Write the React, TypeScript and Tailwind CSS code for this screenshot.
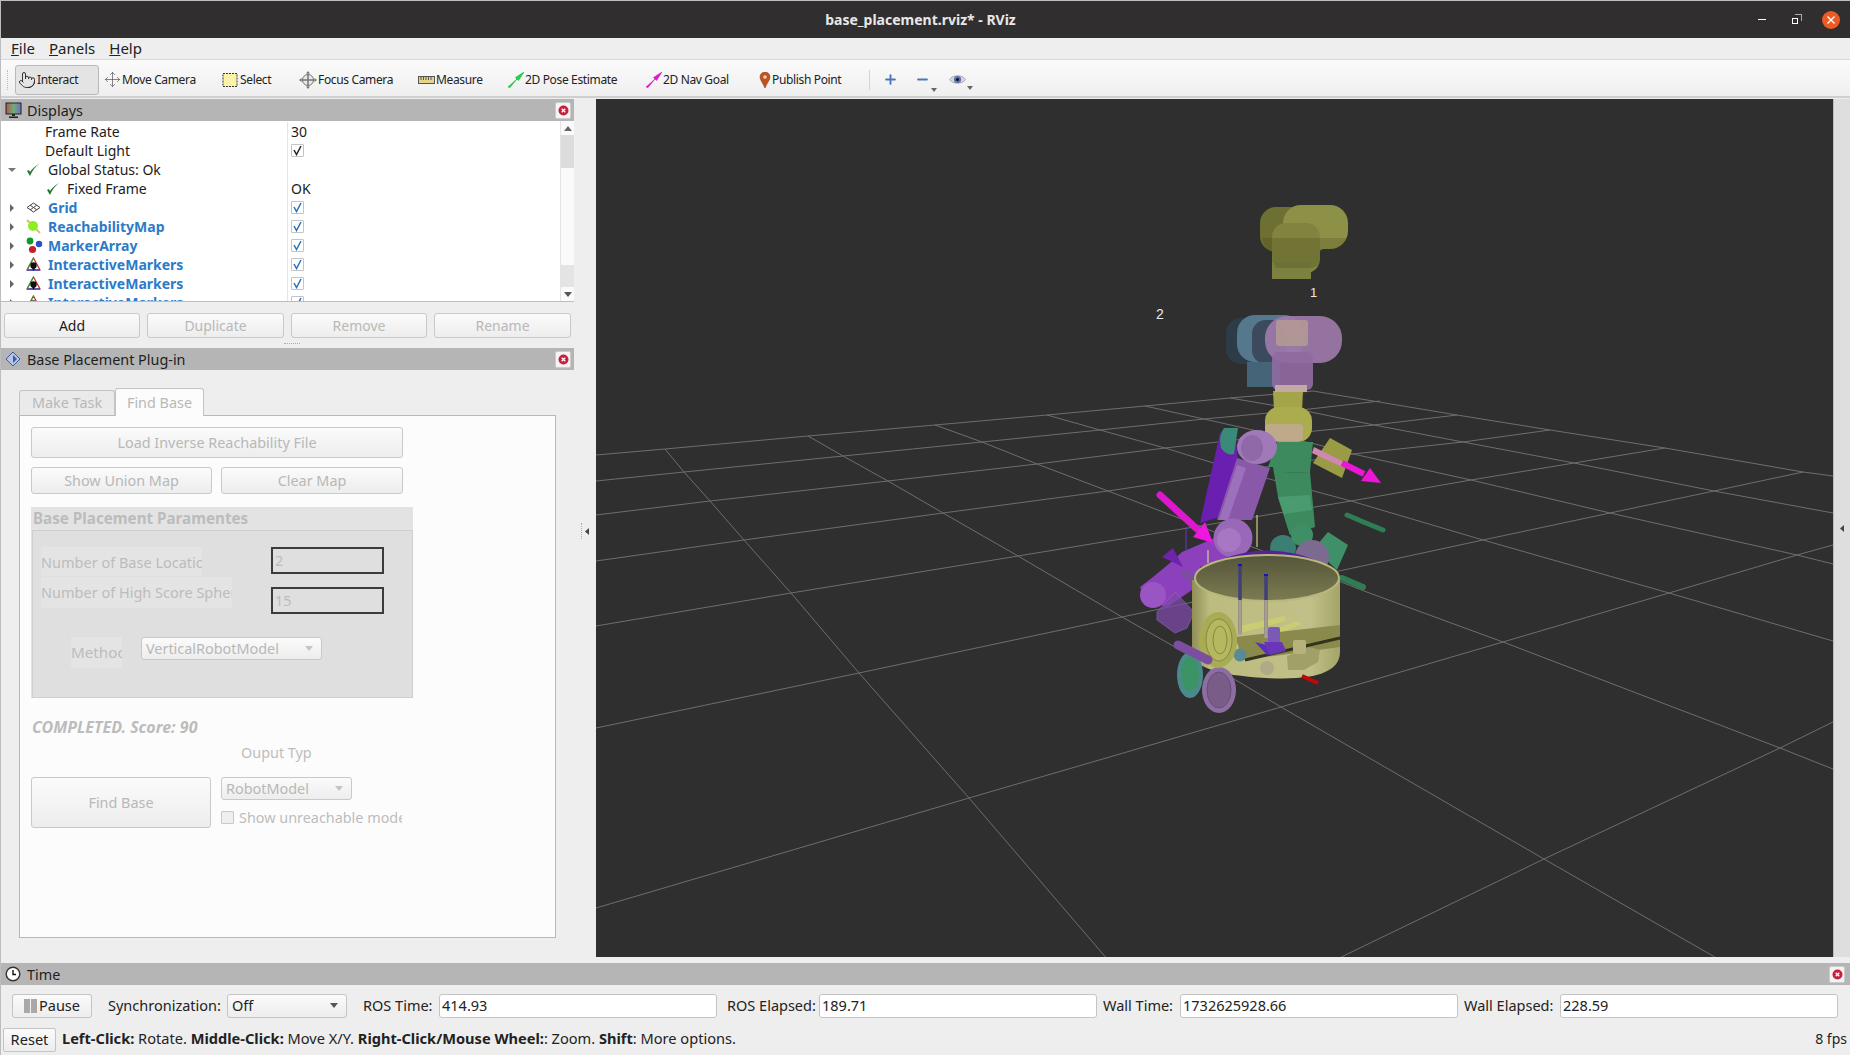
import { Minus, Move, Plus, Pointer } from 'lucide-react';

const Caret = ({ open = false }: { open?: boolean }) => (
  <svg width="8" height="8" viewBox="0 0 8 8" className="shrink-0">
    {open ? <path d="M0 2h8L4 6z" fill="#777" /> : <path d="M2 0l4 4-4 4z" fill="#666" />}
  </svg>
);

const GreenCheck = () => (
  <svg width="14" height="14" viewBox="0 0 14 14" className="shrink-0">
    <path d="M1 8l3 5C6 8 9 4 13 1 9 3 6 6 4 9L3 7z" fill="#1f7a2e" />
  </svg>
);

const CheckBox = ({ color = '#2a6fb5' }: { color?: string }) => (
  <div className="flex h-[13px] w-[13px] items-center justify-center rounded-[1px] border border-[#c4c4c4] bg-white">
    <svg width="11" height="11" viewBox="0 0 11 11">
      <path d="M2 5l2.5 4.5L9 1" fill="none" stroke={color} strokeWidth="1.5" />
    </svg>
  </div>
);

const CloseBtn = () => (
  <div className="flex h-[17px] w-[16px] items-center justify-center rounded-[2px] border border-[#ccc] bg-[#f4f4f4]">
    <svg width="11" height="11" viewBox="0 0 11 11">
      <circle cx="5.5" cy="5.5" r="5" fill="#c8203c" />
      <path d="M3.7 3.7l3.6 3.6M7.3 3.7L3.7 7.3" stroke="#fff" strokeWidth="1.3" />
    </svg>
  </div>
);

const PanelHeader = ({ icon, title, pad = 'pr-[3px]' }: { icon: React.ReactNode; title: string; pad?: string }) => (
  <div className={`flex h-[22px] shrink-0 items-center bg-[#b5b5b5] pl-[4px] text-[14.4px] text-[#1e1e1e] ${pad}`}>
    <div className="flex w-[22px] shrink-0 items-center">{icon}</div>
    <span className="flex-1 pt-[1px]">{title}</span>
    <CloseBtn />
  </div>
);

const MonitorIcon = () => (
  <svg width="17" height="17" viewBox="0 0 17 17">
    <defs>
      <linearGradient id="scr" x1="0" x2="1" y1="0" y2="0">
        <stop offset="0" stopColor="#b5544f" />
        <stop offset="0.5" stopColor="#6fae76" />
        <stop offset="1" stopColor="#6e6fc0" />
      </linearGradient>
    </defs>
    <rect x="1" y="1" width="15" height="11" fill="url(#scr)" stroke="#222" />
    <path d="M7 12h3v2H7zM4 14.5h9v1.5H4z" fill="#222" />
  </svg>
);

const DiamondIcon = () => (
  <svg width="16" height="16" viewBox="0 0 16 16">
    <path d="M8 1l7 7-7 7-7-7z" fill="#b8c4e4" stroke="#3f5a9e" />
    <path d="M8 4l4 4-4 4z" fill="#3f5a9e" />
  </svg>
);

const ClockIcon = () => (
  <svg width="16" height="16" viewBox="0 0 16 16">
    <circle cx="8" cy="8" r="6.8" fill="#fff" stroke="#333" strokeWidth="1.4" />
    <path d="M8 4v4.5h3" fill="none" stroke="#111" strokeWidth="1.4" />
  </svg>
);

const GridIcon = () => (
  <svg width="15" height="11" viewBox="0 0 15 11">
    <path d="M7.5 1L14 5.5 7.5 10 1 5.5zM4.2 3.2l6.5 4.6M10.8 3.2L4.3 7.8" fill="none" stroke="#444" strokeWidth="1" />
  </svg>
);

const ReachIcon = () => (
  <svg width="15" height="15" viewBox="0 0 15 15">
    <path d="M1 1l13 13" stroke="#e8b090" strokeWidth="2" />
    <circle cx="7" cy="7" r="5" fill="#8cf01e" />
  </svg>
);

const MarkerIcon = () => (
  <svg width="17" height="17" viewBox="0 0 17 17">
    <circle cx="4" cy="4" r="3.4" fill="#0e9a2e" />
    <circle cx="13" cy="7" r="3.2" fill="#2450c8" />
    <circle cx="6.5" cy="12.5" r="3.6" fill="#c81e28" />
  </svg>
);

const InteractiveIcon = () => (
  <svg width="15" height="15" viewBox="0 0 15 15">
    <path d="M7.5 1L14 13H1z" fill="none" stroke="#c02828" strokeWidth="1.2" />
    <path d="M1 13h13" stroke="#2a3ccc" strokeWidth="1.4" />
    <path d="M1 13L7.5 1" stroke="#22a83a" strokeWidth="1.2" />
    <circle cx="7.5" cy="8.5" r="3.2" fill="#111" />
    <path d="M6 11l1.5 3 1.5-3z" fill="#111" />
  </svg>
);

const treeRows = [
  { name: 'Grid', icon: <GridIcon /> },
  { name: 'ReachabilityMap', icon: <ReachIcon /> },
  { name: 'MarkerArray', icon: <MarkerIcon /> },
  { name: 'InteractiveMarkers', icon: <InteractiveIcon /> },
  { name: 'InteractiveMarkers', icon: <InteractiveIcon /> },
  { name: 'InteractiveMarkers', icon: <InteractiveIcon /> },
];

const Row = ({ children, value }: { children: React.ReactNode; value?: React.ReactNode }) => (
  <div className="flex h-[19px] shrink-0 items-center">
    <div className="flex h-full w-[286px] shrink-0 items-center">{children}</div>
    <div className="flex h-full flex-1 items-center border-l border-[#e4e4e4] pl-[3px]">{value}</div>
  </div>
);

const DisplaysTree = () => (
  <div className="flex h-[181px] shrink-0 overflow-hidden border-b border-[#bdbdbd] bg-white text-[14px] text-[#1c1c1c]">
    <div className="flex min-w-0 flex-1 flex-col pt-[1px]">
      <Row value={<span>30</span>}>
        <span className="pl-[44px]">Frame Rate</span>
      </Row>
      <Row value={<CheckBox color="#222" />}>
        <span className="pl-[44px]">Default Light</span>
      </Row>
      <Row>
        <div className="flex items-center pl-[7px]">
          <Caret open />
          <div className="ml-[10px] w-[22px]">
            <GreenCheck />
          </div>
          <span>Global Status: Ok</span>
        </div>
      </Row>
      <Row value={<span>OK</span>}>
        <div className="flex items-center pl-[45px]">
          <div className="w-[21px]">
            <GreenCheck />
          </div>
          <span>Fixed Frame</span>
        </div>
      </Row>
      {treeRows.map((r, i) => (
        <Row key={i} value={<CheckBox />}>
          <div className="flex items-center pl-[7px]">
            <Caret />
            <div className="ml-[10px] flex w-[22px] justify-start">{r.icon}</div>
            <span className="font-bold text-[#2b7bc9]">{r.name}</span>
          </div>
        </Row>
      ))}
    </div>
    <div className="flex w-[14px] shrink-0 flex-col border-l border-[#e4e4e4] bg-[#fafafa]">
      <div className="flex h-[14px] items-center justify-center">
        <svg width="8" height="5" viewBox="0 0 8 5">
          <path d="M4 0l4 5H0z" fill="#666" />
        </svg>
      </div>
      <div className="h-[33px] bg-[#dcdcdc]" />
      <div className="flex-1" />
      <div className="h-[22px] bg-[#e4e4e4]" />
      <div className="flex h-[14px] items-center justify-center">
        <svg width="8" height="5" viewBox="0 0 8 5">
          <path d="M4 5l4-5H0z" fill="#555" />
        </svg>
      </div>
    </div>
  </div>
);

const Btn = ({ label, disabled = false, className = '' }: { label: string; disabled?: boolean; className?: string }) => (
  <div
    className={`flex items-center justify-center rounded-[3px] border border-[#c9c9c9] bg-gradient-to-b from-[#fbfbfb] to-[#ededed] ${
      disabled ? 'text-[#b8b8b8]' : 'text-[#1c1c1c]'
    } ${className}`}
  >
    {label}
  </div>
);

const Combo = ({ label, className = '' }: { label: string; className?: string }) => (
  <div
    className={`flex items-center justify-between rounded-[3px] border border-[#c9c9c9] bg-gradient-to-b from-[#fbfbfb] to-[#ededed] pr-[8px] pl-[4px] text-[#b8b8b8] ${className}`}
  >
    <span>{label}</span>
    <svg width="8" height="5" viewBox="0 0 8 5">
      <path d="M0 0h8L4 5z" fill="#c4c4c4" />
    </svg>
  </div>
);

const BasePlacement = () => (
  <div className="flex flex-1 flex-col pt-[18px] pr-[18px] pl-[18px] text-[14.4px]">
    <div className="flex h-[27px] items-end">
      <div className="flex h-[25px] w-[96px] items-center justify-center rounded-t-[3px] border border-b-0 border-[#c4c4c4] bg-[#eaeaea] text-[#b8b8b8]">
        Make Task
      </div>
      <div className="relative z-10 -mb-px flex h-[28px] w-[89px] items-center justify-center rounded-t-[3px] border border-b-0 border-[#c4c4c4] bg-[#fcfcfc] text-[#b8b8b8]">
        Find Base
      </div>
    </div>
    <div className="h-[523px] w-[537px] border border-[#b8b8b8] bg-[#fcfcfc] pt-[11px] pl-[11px]">
      <Btn disabled label="Load Inverse Reachability File" className="h-[31px] w-[372px]" />
      <div className="mt-[9px] flex w-[372px] gap-[9px]">
        <Btn disabled label="Show Union Map" className="h-[27px] w-[181px]" />
        <Btn disabled label="Clear Map" className="h-[27px] w-[182px]" />
      </div>
      <div className="mt-[13px] w-[382px] bg-[#e3e3e3]">
        <div className="flex h-[23px] items-center pl-[2px] text-[15.2px] font-bold text-[#bcbcbc]">Base Placement Paramentes</div>
        <div className="ml-[1px] h-[168px] border border-[#cfcfcf] bg-[#dfdfdf] pt-[16px] pl-[8px] text-[#bcbcbc]">
          <div className="flex h-[30px]">
            <div className="w-[230px]">
              <div className="flex h-[29px] w-[161px] items-center overflow-hidden bg-[#e4e4e4] pt-[2px] text-[14.5px] whitespace-nowrap">
                Number of Base Locations
              </div>
            </div>
            <div className="flex h-[27px] w-[113px] items-center border-2 border-[#3c3c3c] pl-[2px]">2</div>
          </div>
          <div className="flex h-[31px]">
            <div className="w-[230px]">
              <div className="flex h-[31px] w-[191px] items-center overflow-hidden bg-[#e4e4e4] text-[14.5px] whitespace-nowrap">
                Number of High Score Spheres
              </div>
            </div>
            <div className="mt-[10px] flex h-[27px] w-[113px] items-center border-2 border-[#3c3c3c] pl-[2px]">15</div>
          </div>
          <div className="mt-[29px] flex pl-[30px]">
            <div className="flex h-[31px] w-[51px] items-center overflow-hidden bg-[#e4e4e4] text-[15.2px] whitespace-nowrap">Method</div>
            <Combo label="VerticalRobotModel" className="ml-[19px] h-[23px] w-[181px]" />
          </div>
        </div>
      </div>
      <div className="mt-[18px] pl-[1px] text-[16px] leading-[22px] font-bold text-[#bcbcbc] italic">COMPLETED. Score: 90</div>
      <div className="mt-[5px] pl-[210px] leading-[19px] text-[#bcbcbc]">Ouput Typ</div>
      <div className="mt-[15px] flex gap-[10px]">
        <Btn disabled label="Find Base" className="h-[51px] w-[180px]" />
        <div className="flex flex-col">
          <Combo label="RobotModel" className="h-[23px] w-[131px]" />
          <div className="mt-[7px] flex w-[181px] items-center overflow-hidden whitespace-nowrap text-[#bcbcbc]">
            <div className="mr-[5px] h-[13px] w-[13px] shrink-0 rounded-[1px] border border-[#c9c9c9] bg-[#efefef]" />
            Show unreachable models
          </div>
        </div>
      </div>
    </div>
  </div>
);

const tools = [
  {
    label: 'Move Camera',
    width: 'w-[118px]',
    icon: <Move size={17} strokeWidth={1} color="#555" />,
  },
  {
    label: 'Select',
    width: 'w-[77px]',
    icon: (
      <svg width="17" height="16" viewBox="0 0 17 16">
        <rect x="1" y="1.5" width="14" height="13" fill="#fbf3a8" stroke="#333" strokeDasharray="2 1" />
      </svg>
    ),
  },
  {
    label: 'Focus Camera',
    width: 'w-[119px]',
    icon: (
      <svg width="18" height="18" viewBox="0 0 18 18">
        <circle cx="9" cy="9" r="5.5" fill="#e8e8e8" stroke="#777" />
        <path d="M9 1v16M1 9h16M3 9h12M9 3v12" stroke="#777" strokeWidth="1" />
        <path d="M9 0l2 2.5H7zM9 18l2-2.5H7zM0 9l2.5-2v4zM18 9l-2.5-2v4z" fill="#777" />
      </svg>
    ),
  },
  {
    label: 'Measure',
    width: 'w-[90px]',
    icon: (
      <svg width="17" height="8" viewBox="0 0 17 8">
        <rect x="0.5" y="0.5" width="16" height="7" fill="#e4d58c" stroke="#555" />
        <path d="M3 1v3M5.5 1v3M8 1v3M10.5 1v3M13 1v3" stroke="#555" />
      </svg>
    ),
  },
  {
    label: '2D Pose Estimate',
    width: 'w-[138px]',
    icon: (
      <svg width="16" height="16" viewBox="0 0 16 16">
        <path d="M0 15L9 7 7.5 5.5 16 0l-5.5 8.5L9 7l-7 8.5z" fill="#12e03c" stroke="#12a030" strokeWidth="0.5" />
      </svg>
    ),
  },
  {
    label: '2D Nav Goal',
    width: 'w-[113px]',
    icon: (
      <svg width="16" height="16" viewBox="0 0 16 16">
        <path d="M0 15L9 7 7.5 5.5 16 0l-5.5 8.5L9 7l-7 8.5z" fill="#f012d0" stroke="#c010a8" strokeWidth="0.5" />
      </svg>
    ),
  },
  {
    label: 'Publish Point',
    width: 'w-[110px]',
    icon: (
      <svg width="12" height="16" viewBox="0 0 12 16">
        <path d="M6 16C4 11 1 8 1 5a5 5 0 0 1 10 0c0 3-3 6-5 11z" fill="#c4501e" stroke="#7a4a30" strokeWidth="0.6" />
        <circle cx="6" cy="5" r="1.8" fill="#f4d0b0" />
      </svg>
    ),
  },
];

const SmallCaret = () => (
  <svg width="6" height="4" viewBox="0 0 6 4" className="absolute right-[-7px] bottom-[-5px]">
    <path d="M0 0h6L3 4z" fill="#666" />
  </svg>
);

const Toolbar = () => (
  <div className="flex h-[38px] shrink-0 items-center border-b-2 border-[#cfcfcf] bg-gradient-to-b from-[#fbfbfb] to-[#efefef] pt-[3px] pl-[6px] text-[12px] tracking-[-0.35px] text-[#222]">
    <div className="mr-[6px] h-[20px] w-[2px] border-l border-dotted border-[#bbb]" />
    <div className="mr-[5px] flex h-[30px] w-[84px] items-center rounded-[3px] border border-[#b9b9b9] bg-[#e4e4e4] pl-[2px]">
      <Pointer size={18} strokeWidth={1.2} color="#222" />
      <span className="ml-[1px]">Interact</span>
    </div>
    {tools.map((t) => (
      <div key={t.label} className={`flex shrink-0 items-center gap-[1px] ${t.width}`}>
        {t.icon}
        <span className="whitespace-nowrap">{t.label}</span>
      </div>
    ))}
    <div className="mr-[13px] h-[20px] w-px bg-[#d4d4d4]" />
    <div className="mr-[17px]">
      <Plus size={15} strokeWidth={3} color="#4878b4" />
    </div>
    <div className="relative mr-[19px]">
      <Minus size={15} strokeWidth={3.4} color="#4878b4" />
      <SmallCaret />
    </div>
    <div className="relative">
      <svg width="17" height="11" viewBox="0 0 17 11">
        <path d="M0.5 5.5C4 0.5 13 0.5 16.5 5.5 13 10.5 4 10.5 0.5 5.5z" fill="#d8d8e4" stroke="#aaa" />
        <circle cx="8.5" cy="5.5" r="3.6" fill="#5a6eb4" />
        <circle cx="8.5" cy="5.5" r="1.5" fill="#111" />
      </svg>
      <SmallCaret />
    </div>
  </div>
);

const grid = [
  '596,455 665,449 808,436 935,425 1047,415 1145,406 1230,398 1313,391',
  '596,481 684,472 843,456 982,442 1100,430 1204,419 1301,410 1380,401',
  '596,515 710,501 888,481 1037,464 1165,448 1315,431 1374,425 1457,415',
  '596,561 744,540 943,513 1108,491 1353,454 1463,442 1550,430',
  '596,626 791,593 1018,556 1188,528 1351,501 1471,480 1574,463 1665,448',
  '596,728 859,673 1122,617 1339,571 1483,540 1610,513 1714,491 1803,472',
  '596,908 969,798 1281,707 1503,642 1669,593 1797,555 1833,545',
  '1335,960 1544,859 1780,748 1833,722',
];

const gridFar = [
  '665,449 684,472 710,501 744,540 791,593 859,673 969,798 1108,960',
  '808,436 843,456 888,481 943,513 1018,556 1122,617 1175,647 1234,679 1281,707 1544,859 1720,960',
  '935,425 982,442 1037,464 1108,491 1184,520 1364,591 1503,642 1780,748 1833,769',
  '1047,415 1100,430 1165,448 1236,470 1351,501 1483,540 1669,593 1833,641',
  '1145,406 1204,419 1315,444 1353,454 1471,480 1610,513 1797,555 1833,564',
  '1230,398 1301,410 1374,425 1463,442 1574,463 1714,491 1833,513',
  '1313,391 1457,415 1550,430 1665,448 1803,472 1833,476',
];

// everything below is in page pixels, the viewBox starts at the viewport's corner
const Scene = () => (
  <svg className="h-full w-full" viewBox="596 99 1237 858" fill="none">
    <defs>
      <linearGradient id="bodyGrad" x1="0" x2="1" y1="0" y2="0">
        <stop offset="0" stopColor="#8e8e55" />
        <stop offset="0.12" stopColor="#bcbc80" />
        <stop offset="0.8" stopColor="#c0c088" />
        <stop offset="1" stopColor="#a5a56a" />
      </linearGradient>
      <linearGradient id="innerGrad" x1="0" x2="0" y1="0" y2="1">
        <stop offset="0" stopColor="#55553a" />
        <stop offset="1" stopColor="#7c7c52" />
      </linearGradient>
    </defs>
    {grid.concat(gridFar).map((p) => (
      <polyline key={p} points={p} stroke="#6e6e6e" strokeWidth="1" />
    ))}

    {/* floating head 1 */}
    <rect x="1260" y="207" width="70" height="45" rx="16" fill="#6e7033" />
    <rect x="1283" y="205" width="65" height="44" rx="18" fill="#8d9148" />
    <rect x="1272" y="223" width="48" height="50" rx="14" fill="#80843f" />
    <rect x="1272" y="262" width="39" height="17" fill="#7d8140" />
    <path d="M1262 238h86q-1 9-14 11h-14v14q-2 4-10 5h-34q-4-6-4-14-9-6-10-16z" fill="#3a3c10" opacity="0.22" />

    {/* blue head */}
    <rect x="1226" y="318" width="40" height="46" rx="15" fill="#2d3d48" />
    <rect x="1237" y="315" width="65" height="47" rx="18" fill="#56788c" />
    <rect x="1252" y="320" width="34" height="44" rx="14" fill="#3b4a5c" />
    <rect x="1247" y="362" width="33" height="25" fill="#466478" />

    {/* pink head and yellow neck */}
    <path d="M1273 391h30l-1 20h-28z" fill="#a3a548" />
    <rect x="1265" y="316" width="77" height="47" rx="22" fill="#9d79ab" opacity="0.92" />
    <rect x="1272" y="352" width="41" height="38" rx="6" fill="#8f6a9f" opacity="0.92" />
    <rect x="1276" y="320" width="32" height="26" rx="3" fill="#b8a290" opacity="0.75" />
    <rect x="1275" y="385" width="32" height="7" fill="#c4a8a4" />

    {/* green arm */}
    <path d="M1268 467l9-25h36l-3 30-27 1 7 0 5 54-5 8-12-38-5-30z" fill="#3d8a5f" />
    <path d="M1278 473l32-1 5 55-25 8-12-38z" fill="#3d8a5f" />
    <path d="M1278 497l32-2 2 15-28 4z" fill="#4a9c70" />
    <circle cx="1283" cy="548" r="13" fill="#3b7f74" />
    <circle cx="1302" cy="535" r="11" fill="#3f8f66" />
    <path d="M1317 545l11-13 20 13-11 25-14-13z" fill="#3f9068" />
    <circle cx="1312" cy="557" r="17" fill="#7c6a90" />
    <path d="M1347 515l12 5M1361 521L1383 530" stroke="#2f7d55" strokeWidth="5" strokeLinecap="round" />
    <path d="M1342 578L1363 587" stroke="#2f7d55" strokeWidth="6" strokeLinecap="round" />

    {/* yellow wrist over the green arm */}
    <rect x="1265" y="407" width="47" height="35" rx="14" fill="#aaac4e" />
    <rect x="1265" y="424" width="38" height="17" rx="4" fill="#c0aa90" opacity="0.9" />

    {/* purple arm */}
    <path d="M1220 433l15-3 3 30-18 57-20 6z" fill="#6a1fb0" />
    <path d="M1237 458l33 10-18 52-35 0z" fill="#8a58a8" />
    <path d="M1237 465l9 3-18 52h-9z" fill="#9c70bb" />
    <path d="M1224 428q-6 8-3 20 5 8 13 6l4-26z" fill="#3a8a7a" />
    <ellipse cx="1257" cy="447" rx="20" ry="17" fill="#a07ab8" />
    <ellipse cx="1252" cy="448" rx="11" ry="13" fill="#8f69a8" />
    <path d="M1186 527v23" stroke="#6b35d0" strokeWidth="1" />
    <path d="M1257 515v32" stroke="#b5ae70" strokeWidth="1.5" />
    <path d="M1182 552l35-15 13 21-30 9-8 23-25 17-22-7-5-13 13-10 17-14z" fill="#8c40bb" />
    <path d="M1162 557l11-9 10 19z" fill="#6f22aa" />
    <circle cx="1233" cy="538" r="19.5" fill="#9a68b8" />
    <circle cx="1229" cy="540" r="12" fill="#a877c4" />
    <path d="M1208 550v13" stroke="#c0b894" strokeWidth="1.5" />
    <circle cx="1153" cy="595" r="13" fill="#9a55c4" />
    <path d="M1157 612l18-20 19 20-7 16-12 5-18-13z" fill="#7d4aa8" opacity="0.75" stroke="#8e63b5" />
    <path d="M1185 573L1215 598" stroke="#7c4ea0" strokeWidth="8" strokeLinecap="round" />

    {/* base cylinder */}
    <path d="M1220 560q50-20 100 2v10h-100z" fill="#5a1f9c" />
    <path d="M1192 580v72q0 22 74 26t74-26v-72z" fill="url(#bodyGrad)" />
    <ellipse cx="1267" cy="578" rx="72" ry="23" fill="url(#innerGrad)" stroke="#b8b87c" strokeWidth="2" />
    <path d="M1240 626l44-10 2 5-46 12zM1236 645l60-24 6 3-62 26z" fill="#cdd26c" opacity="0.75" />
    <path d="M1235 637l105-12v22l-97 13z" fill="#8a8a4c" />
    <path d="M1245 660l95-22" stroke="#33331e" strokeWidth="3" />
    <path d="M1240 565v68" stroke="#403f78" strokeWidth="3.5" />
    <path d="M1240 600v35" stroke="#a8a08c" strokeWidth="3.5" />
    <path d="M1266 575v60" stroke="#403f78" strokeWidth="3.5" />
    <path d="M1266 600v38" stroke="#a8a08c" strokeWidth="3.5" />
    <path d="M1238 565h4M1264 575h4" stroke="#1414b8" strokeWidth="2" />
    <rect x="1268" y="627" width="12" height="16" rx="2" fill="#7a5ab4" />
    <path d="M1255 642l30 8-18 5z" fill="#5a2cc0" />
    <path d="M1264 642h18l4 9-16 4z" fill="#6a36b8" />
    <path d="M1287 656l22-9 11 3-2 12-14 8h-16z" fill="#a0a068" />
    <rect x="1293" y="640" width="13" height="14" rx="2" fill="#b5b27e" />
    <path d="M1302 676l16 7" stroke="#c00808" strokeWidth="4" />
    <circle cx="1240" cy="655" r="6.5" fill="#5a8a94" />
    <circle cx="1267" cy="668" r="7" fill="#b0aa88" />

    {/* wheels */}
    <ellipse cx="1190" cy="675" rx="13" ry="23" fill="#4a8a8a" />
    <ellipse cx="1190" cy="674" rx="9" ry="17" fill="#3c9466" />
    <ellipse cx="1219" cy="690" rx="17" ry="23" fill="#8d6ea2" />
    <ellipse cx="1219" cy="690" rx="12" ry="18" fill="#7a5c88" stroke="#6a4c78" />
    <ellipse cx="1218" cy="640" rx="19" ry="28" fill="#a8ac55" />
    <ellipse cx="1219" cy="640" rx="13" ry="21" fill="#b5b85e" stroke="#85883e" />
    <ellipse cx="1220" cy="640" rx="7" ry="14" stroke="#85883e" />
    <path d="M1178 645L1208 660" stroke="#7c4ea0" strokeWidth="9" strokeLinecap="round" />

    {/* right gripper and arrows */}
    <path d="M1330 438l22 12-10 28-29-15z" fill="#9a9c45" />
    <path d="M1314 447l30 15-2 5-30-14z" fill="#d088b0" />
    <path d="M1342 463l22 11" stroke="#ec15d8" strokeWidth="6" />
    <path d="M1370 468l11 15-20-2z" fill="#ec15d8" />
    <path d="M1160 495l37 34" stroke="#dc18cc" strokeWidth="7" strokeLinecap="round" />
    <path d="M1205 522l8 21-20-6z" fill="#f015e0" />

    <text x="1310" y="297" fill="#e8e8e8" fontSize="13" fontFamily="Liberation Sans, sans-serif">1</text>
    <text x="1156" y="319" fill="#e8e8e8" fontSize="14" fontFamily="Liberation Sans, sans-serif">2</text>
  </svg>
);

const TimeField = ({ label, value, labelClass }: { label: string; value: string; labelClass: string }) => (
  <>
    <span className={`whitespace-nowrap ${labelClass}`}>{label}</span>
    <div className="flex h-[24px] w-[278px] shrink-0 items-center rounded-[3px] border border-[#c4c4c4] bg-white pl-[2px]">
      {value}
    </div>
  </>
);

export default function App() {
  return (
    <div className="flex h-[1055px] w-[1850px] flex-col overflow-hidden border-t border-l border-[#bdbdbd] bg-[#eeeeee] font-['Noto_Sans',sans-serif] text-[14px] text-[#222]">
      {/* title bar */}
      <div className="flex h-[37px] shrink-0 items-center justify-between bg-[#302e2e] pr-[10px] text-white">
        <div className="w-[200px]" />
        <span className="text-[14px] font-bold text-[#e8e8e8]">base_placement.rviz* - RViz</span>
        <div className="flex w-[200px] items-center justify-end">
          <div className="mr-[26px] h-px w-[8px] bg-white" />
          <div className="relative mr-[22px] h-[8px] w-[8px]">
            <div className="absolute top-[-2px] right-[-2px] h-[7px] w-[7px] border-t border-r border-[#aaa]" />
            <div className="absolute bottom-0 left-0 h-[6px] w-[6px] border border-white" />
          </div>
          <div className="flex h-[18px] w-[18px] items-center justify-center rounded-full bg-[#ee5a24]">
            <svg width="10" height="10" viewBox="0 0 10 10">
              <path d="M1.5 1.5l7 7M8.5 1.5l-7 7" stroke="#fff" strokeWidth="1.4" />
            </svg>
          </div>
        </div>
      </div>

      {/* menu bar */}
      <div className="flex h-[22px] shrink-0 items-center gap-[14px] border-b border-[#d8d8d8] bg-[#eeeeee] pl-[10px] text-[15px]">
        <span>
          <span className="underline">F</span>ile
        </span>
        <span>
          <span className="underline">P</span>anels
        </span>
        <span>
          <span className="underline">H</span>elp
        </span>
      </div>

      <Toolbar />

      {/* main area */}
      <div className="flex h-[865px] shrink-0 pt-[1px]">
        <div className="flex w-[573px] shrink-0 flex-col">
          <PanelHeader icon={<MonitorIcon />} title="Displays" />
          <DisplaysTree />
          <div className="mt-[11px] flex gap-[7px] pl-[3px]">
            <Btn label="Add" className="h-[25px] w-[136px]" />
            <Btn disabled label="Duplicate" className="h-[25px] w-[137px]" />
            <Btn disabled label="Remove" className="h-[25px] w-[136px]" />
            <Btn disabled label="Rename" className="h-[25px] w-[137px]" />
          </div>
          <div className="flex h-[10px] items-center justify-center pl-[8px]">
            <div className="w-[16px] border-t border-dotted border-[#aaa]" />
          </div>
          <PanelHeader icon={<DiamondIcon />} title="Base Placement Plug-in" />
          <BasePlacement />
        </div>

        <div className="flex w-[22px] shrink-0 items-center justify-center">
          <div className="mr-[3px] h-[16px] border-l border-dotted border-[#aaa]" />
          <svg width="4" height="7" viewBox="0 0 4 7">
            <path d="M4 0v7L0 3.5z" fill="#444" />
          </svg>
        </div>

        <div className="h-[858px] w-[1237px] shrink-0 bg-[#2f2f2f]">
          <Scene />
        </div>

        <div className="flex h-[858px] flex-1 items-center justify-center border-l border-[#bbb] bg-[#dedede]">
          <svg width="4" height="7" viewBox="0 0 4 7">
            <path d="M4 0v7L0 3.5z" fill="#444" />
          </svg>
        </div>
      </div>

      {/* time panel */}
      <PanelHeader icon={<ClockIcon />} title="Time" pad="pr-[5px]" />
      <div className="flex h-[41px] shrink-0 items-center pl-[11px] text-[14.5px]">
        <div className="flex h-[24px] w-[80px] shrink-0 items-center justify-center rounded-[3px] border border-[#c4c4c4] bg-gradient-to-b from-[#fbfbfb] to-[#ededed]">
          <div className="mr-[1px] h-[14px] w-[6px] bg-[#a8a8a8]" />
          <div className="mr-[2px] h-[14px] w-[6px] bg-[#a8a8a8]" />
          Pause
        </div>
        <span className="ml-[16px] w-[119px] shrink-0">Synchronization:</span>
        <div className="flex h-[24px] w-[120px] shrink-0 items-center justify-between rounded-[3px] border border-[#c4c4c4] bg-gradient-to-b from-[#fbfbfb] to-[#ededed] pr-[8px] pl-[4px]">
          Off
          <svg width="8" height="5" viewBox="0 0 8 5">
            <path d="M0 0h8L4 5z" fill="#555" />
          </svg>
        </div>
        <TimeField label="ROS Time:" value="414.93" labelClass="ml-[16px] w-[76px]" />
        <TimeField label="ROS Elapsed:" value="189.71" labelClass="ml-[10px] w-[92px]" />
        <TimeField label="Wall Time:" value="1732625928.66" labelClass="ml-[6px] w-[77px]" />
        <TimeField label="Wall Elapsed:" value="228.59" labelClass="ml-[6px] w-[96px]" />
      </div>

      {/* status bar */}
      <div className="flex h-[28px] shrink-0 items-center pr-[3px] pl-[2px] text-[14.6px]">
        <div className="flex h-[24px] w-[53px] items-center justify-center rounded-[2px] border border-[#c4c4c4] bg-gradient-to-b from-[#fbfbfb] to-[#ededed]">
          Reset
        </div>
        <p className="ml-[6px] flex-1 pb-[3px] whitespace-pre">
          <b>Left-Click:</b> Rotate. <b>Middle-Click:</b> Move X/Y. <b>Right-Click/Mouse Wheel:</b>: Zoom. <b>Shift</b>: More options.
        </p>
        <span className="pb-[3px] text-[14px]">8 fps</span>
      </div>
    </div>
  );
}
